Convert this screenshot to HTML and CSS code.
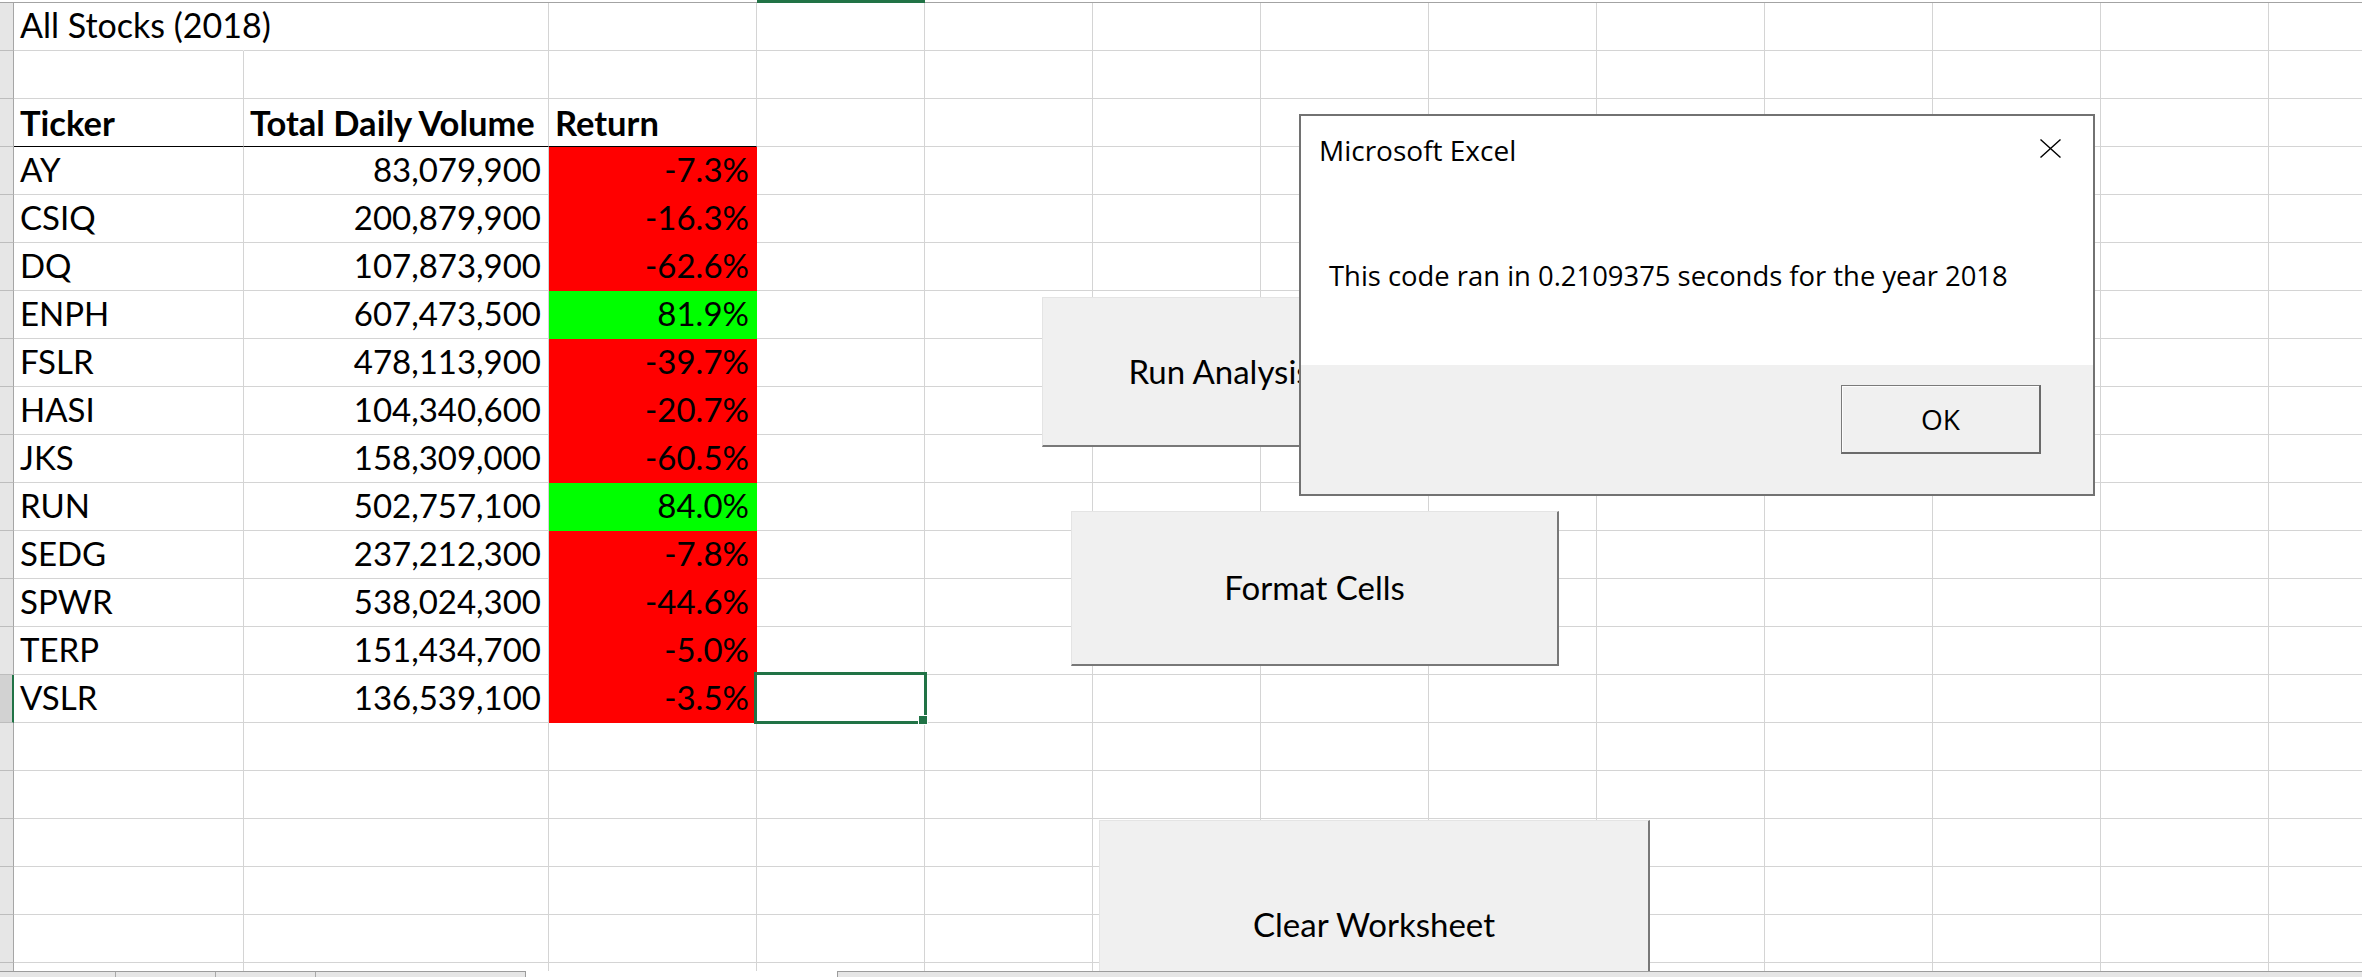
FILE: index.html
```html
<!DOCTYPE html>
<html lang="en">
<head>
<meta charset="utf-8">
<title>All Stocks (2018)</title>
<link rel="stylesheet" href="styles.css">
</head>
<body>
<div class="sheet">
  <div class="colhead"><i></i><i></i><i></i><i></i><i class="cs"></i></div>
  <div class="rows">
    <div class="row"><b class="rh"></b><div class="c ov">All Stocks (2018)</div><i></i><i></i><i></i><i></i><i></i><i></i><i></i><i></i><i></i><i></i><i></i><i></i></div>
    <div class="row"><b class="rh"></b><i></i><i></i><i></i><i></i><i></i><i></i><i></i><i></i><i></i><i></i><i></i><i></i><i></i></div>
    <div class="row"><b class="rh"></b><div class="c bd hd">Ticker</div><div class="c bd hd">Total Daily Volume</div><div class="c bd hd">Return</div><i></i><i></i><i></i><i></i><i></i><i></i><i></i><i></i><i></i><i></i></div>
    <div class="row"><b class="rh"></b><div class="c">AY</div><div class="c r">83,079,900</div><div class="c r neg">-7.3%</div><i></i><i></i><i></i><i></i><i></i><i></i><i></i><i></i><i></i><i></i></div>
    <div class="row"><b class="rh"></b><div class="c">CSIQ</div><div class="c r">200,879,900</div><div class="c r neg">-16.3%</div><i></i><i></i><i></i><i></i><i></i><i></i><i></i><i></i><i></i><i></i></div>
    <div class="row"><b class="rh"></b><div class="c">DQ</div><div class="c r">107,873,900</div><div class="c r neg">-62.6%</div><i></i><i></i><i></i><i></i><i></i><i></i><i></i><i></i><i></i><i></i></div>
    <div class="row"><b class="rh"></b><div class="c">ENPH</div><div class="c r">607,473,500</div><div class="c r pos">81.9%</div><i></i><i></i><i></i><i></i><i></i><i></i><i></i><i></i><i></i><i></i></div>
    <div class="row"><b class="rh"></b><div class="c">FSLR</div><div class="c r">478,113,900</div><div class="c r neg">-39.7%</div><i></i><i></i><i></i><i></i><i></i><i></i><i></i><i></i><i></i><i></i></div>
    <div class="row"><b class="rh"></b><div class="c">HASI</div><div class="c r">104,340,600</div><div class="c r neg">-20.7%</div><i></i><i></i><i></i><i></i><i></i><i></i><i></i><i></i><i></i><i></i></div>
    <div class="row"><b class="rh"></b><div class="c">JKS</div><div class="c r">158,309,000</div><div class="c r neg">-60.5%</div><i></i><i></i><i></i><i></i><i></i><i></i><i></i><i></i><i></i><i></i></div>
    <div class="row"><b class="rh"></b><div class="c">RUN</div><div class="c r">502,757,100</div><div class="c r pos">84.0%</div><i></i><i></i><i></i><i></i><i></i><i></i><i></i><i></i><i></i><i></i></div>
    <div class="row"><b class="rh"></b><div class="c">SEDG</div><div class="c r">237,212,300</div><div class="c r neg">-7.8%</div><i></i><i></i><i></i><i></i><i></i><i></i><i></i><i></i><i></i><i></i></div>
    <div class="row"><b class="rh"></b><div class="c">SPWR</div><div class="c r">538,024,300</div><div class="c r neg">-44.6%</div><i></i><i></i><i></i><i></i><i></i><i></i><i></i><i></i><i></i><i></i></div>
    <div class="row"><b class="rh"></b><div class="c">TERP</div><div class="c r">151,434,700</div><div class="c r neg">-5.0%</div><i></i><i></i><i></i><i></i><i></i><i></i><i></i><i></i><i></i><i></i></div>
    <div class="row"><b class="rh on"></b><div class="c">VSLR</div><div class="c r">136,539,100</div><div class="c r neg">-3.5%</div><i class="selcell"><span class="handle"></span></i><i></i><i></i><i></i><i></i><i></i><i></i><i></i><i></i><i></i></div>
    <div class="row"><b class="rh"></b><i></i><i></i><i></i><i></i><i></i><i></i><i></i><i></i><i></i><i></i><i></i><i></i><i></i></div>
    <div class="row"><b class="rh"></b><i></i><i></i><i></i><i></i><i></i><i></i><i></i><i></i><i></i><i></i><i></i><i></i><i></i></div>
    <div class="row"><b class="rh"></b><i></i><i></i><i></i><i></i><i></i><i></i><i></i><i></i><i></i><i></i><i></i><i></i><i></i></div>
    <div class="row"><b class="rh"></b><i></i><i></i><i></i><i></i><i></i><i></i><i></i><i></i><i></i><i></i><i></i><i></i><i></i></div>
    <div class="row"><b class="rh"></b><i></i><i></i><i></i><i></i><i></i><i></i><i></i><i></i><i></i><i></i><i></i><i></i><i></i></div>
    <div class="row"><b class="rh"></b><i></i><i></i><i></i><i></i><i></i><i></i><i></i><i></i><i></i><i></i><i></i><i></i><i></i></div>
  </div>

  <div class="btn run">Run Analysis</div>
  <div class="btn fmt">Format Cells</div>
  <div class="btn clr">Clear Worksheet</div>

  <div class="dlg">
    <div class="dlg-main">
      <div class="dlg-title">Microsoft Excel</div>
      <svg class="dlg-x" viewBox="0 0 21 19" width="21" height="19"><path d="M0.5 0.5 L20.5 18.5 M20.5 0.5 L0.5 18.5" stroke="#000" stroke-width="1.4" fill="none"/></svg>
      <div class="dlg-msg">This code ran in 0.2109375 seconds for the year 2018</div>
    </div>
    <div class="dlg-foot"><div class="ok">OK</div></div>
  </div>
</div>
<div class="bar">
  <div class="tabs"><i class="t1"></i><i></i><i></i></div>
  <div class="gap"></div>
  <div class="scroll"></div>
</div>
</body>
</html>
```
FILE: styles.css
```css
* { box-sizing: border-box; margin: 0; padding: 0; }
html, body { width: 2362px; height: 977px; overflow: hidden; background: #fff; }
body { font-family: Lato, "Liberation Sans", sans-serif; color: #000; }

.sheet { position: relative; height: 971px; overflow: hidden; }

.colhead {
  display: grid;
  grid-template-columns: 14px 230px 305px 208px 168px;
  height: 3px;
  border-bottom: 1px solid #a3a3a3;
  background: #fff;
}
.colhead i { display: block; }
.colhead .cs { background: #217346; height: 3px; }

.row {
  display: grid;
  grid-template-columns: 14px 230px 305px 208px repeat(10, 168px);
  height: 48px;
}
.row > * {
  display: block;
  border-right: 1px solid #d4d4d4;
  border-bottom: 1px solid #d4d4d4;
}
.row > .rh { background: #e6e6e6; border-right-color: #a6a6a6; border-bottom-color: #bdbdbd; }
.row > .rh.on { background: #d2d2d2; border-right: 2px solid #217346; }

.c {
  display: flex;
  align-items: flex-end;
  padding: 0 7px 4px 6px;
  font-size: 33px;
  line-height: 1.2;
  white-space: nowrap;
}
.c.r { justify-content: flex-end; }
.c.bd { font-weight: 700; font-size: 34.5px; padding-bottom: 3px; }
.c.ov { font-size: 34px; }
.row > .hd { border-bottom-color: #000; }
.row > .ov { border-right-color: transparent; overflow: visible; }
.row > .neg { background: #ff0000; border-color: #ff0000; }
.row > .pos { background: #00ff00; border-color: #00ff00; }

.selcell { position: relative; }
.selcell::before {
  content: "";
  position: absolute;
  left: -3px; top: -3px; right: -3px; bottom: -2px;
  border: 3px solid #217346;
}
.handle {
  position: absolute;
  right: -4px; bottom: -3px;
  width: 10px; height: 10px;
  background: #217346;
  border: 1px solid #fff;
}

.btn {
  position: absolute;
  background: #f0f0f0;
  border-top: 1px solid #e4e4e4;
  border-left: 1px solid #e4e4e4;
  border-right: 2px solid #787878;
  border-bottom: 2px solid #787878;
  display: flex;
  align-items: center;
  justify-content: center;
  font-size: 33px;
  line-height: 1.2;
  white-space: nowrap;
}
.run { left: 1042px; top: 297px; width: 356px; height: 150px; }
.fmt { left: 1071px; top: 511px; width: 488px; height: 155px; }
.clr { left: 1099px; top: 820px; width: 551px; height: 210px; }

.dlg {
  position: absolute;
  left: 1299px; top: 114px;
  width: 796px; height: 382px;
  border: 2px solid #727272;
  background: #fff;
  display: flex;
  flex-direction: column;
  font-family: "Open Sans", "Noto Sans", sans-serif;
}
.dlg-main { flex: 1; position: relative; }
.dlg-title { font-size: 28px; line-height: 38px; padding: 15px 0 0 18px; }
.dlg-x { position: absolute; top: 23px; right: 32px; }
.dlg-msg { font-size: 27.4px; line-height: 38px; padding: 88px 0 0 28px; white-space: nowrap; }
.dlg-foot {
  height: 129px;
  background: #f0f0f0;
  display: flex;
  justify-content: flex-end;
  align-items: flex-start;
  padding: 20px 52px 0 0;
}
.ok {
  width: 200px; height: 69px;
  border: 1px solid #7a7a7a;
  border-right: 2px solid #6a6a6a;
  border-bottom: 2px solid #6a6a6a;
  box-shadow: inset 1px 1px 0 #fdfdfd;
  background: #f0f0f0;
  display: flex;
  align-items: center;
  justify-content: center;
  font-size: 28px;
  line-height: 38px;
}

.bar { display: flex; height: 6px; }
.tabs {
  width: 526px;
  background: #e6e6e6;
  border-top: 1px solid #9c9c9c;
  border-right: 1px solid #9c9c9c;
  display: flex;
}
.tabs i { display: block; width: 100px; height: 5px; border-right: 1px solid #a8a8a8; }
.tabs .t1 { width: 116px; }
.gap { width: 311px; }
.scroll { flex: 1; background: #e6e6e6; border-top: 1px solid #9c9c9c; border-left: 1px solid #9c9c9c; }
```
